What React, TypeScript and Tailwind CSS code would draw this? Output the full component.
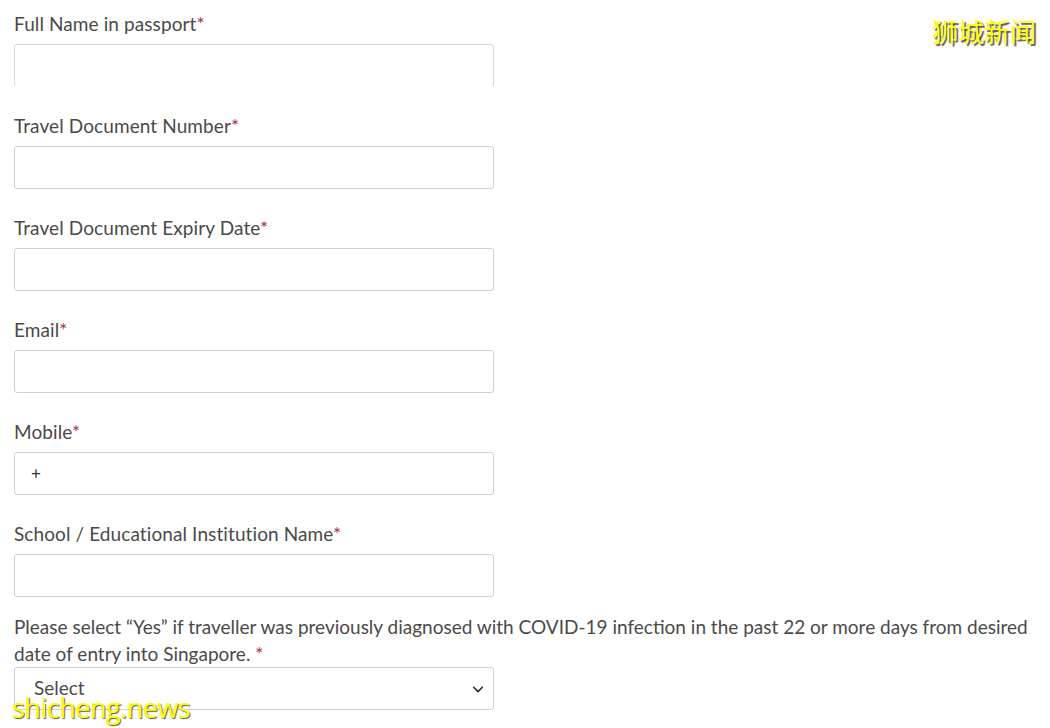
const fields = [
  { label: "Full Name in passport", prefix: "", cut: true },
  { label: "Travel Document Number", prefix: "" },
  { label: "Travel Document Expiry Date", prefix: "" },
  { label: "Email", prefix: "" },
  { label: "Mobile", prefix: "+" },
  { label: "School / Educational Institution Name", prefix: "" },
];

function Star() {
  return <span className="text-[#a8323c]">*</span>;
}

export default function App() {
  return (
    <div className="relative w-[1050px] h-[728px] overflow-hidden bg-white font-['Lato','Liberation_Sans',sans-serif] text-[#4a4a4a]">
      <div className="pl-[14px] pt-[12px]">
        {fields.map((f) => (
          <div key={f.label} className="mb-[27px]">
            <div className="text-[19px] leading-[24px] mb-[8px] tracking-[0.1px]">
              {f.label}
              <Star />
            </div>
            <div
              className={`w-[480px] h-[43px] border rounded-[3px] flex items-center pl-[16px] text-[17px] text-[#333] ${
                f.cut ? "border-[#d8d8d8] border-b-transparent" : "border-[#d0d0d0]"
              }`}
            >
              {f.prefix}
            </div>
          </div>
        ))}
        <p className="-mt-[11px] text-[19px] leading-[27px] w-[1030px]">
          Please select “Yes” if traveller was previously diagnosed with COVID-19 infection in the past 22 or more days from desired date of entry into Singapore. <Star />
        </p>
        <div className="w-[480px] h-[43px] border border-[#d0d0d0] rounded-[3px] flex items-center justify-between pl-[19px] pr-[8px] text-[19px]">
          <span>Select</span>
          <svg width="14" height="14" viewBox="0 0 16 16" fill="none" stroke="#333" strokeWidth="2" strokeLinecap="round" strokeLinejoin="round">
            <path d="M3 6l5 5 5-5" />
          </svg>
        </div>
      </div>

      <div className="absolute top-[14px] right-[14px] text-[26px] leading-[34px] text-[#ffff00] font-['Noto_Sans_CJK_SC',sans-serif] [text-shadow:2px_2px_1px_#555]">
        狮城新闻
      </div>
      <div className="absolute left-[12px] top-[692px] text-[27px] leading-[32px] text-[#ffff00] font-['Open_Sans','Liberation_Sans',sans-serif] tracking-[-0.5px] [text-shadow:1px_1px_1px_#555]">
        shicheng.news
      </div>
    </div>
  );
}
